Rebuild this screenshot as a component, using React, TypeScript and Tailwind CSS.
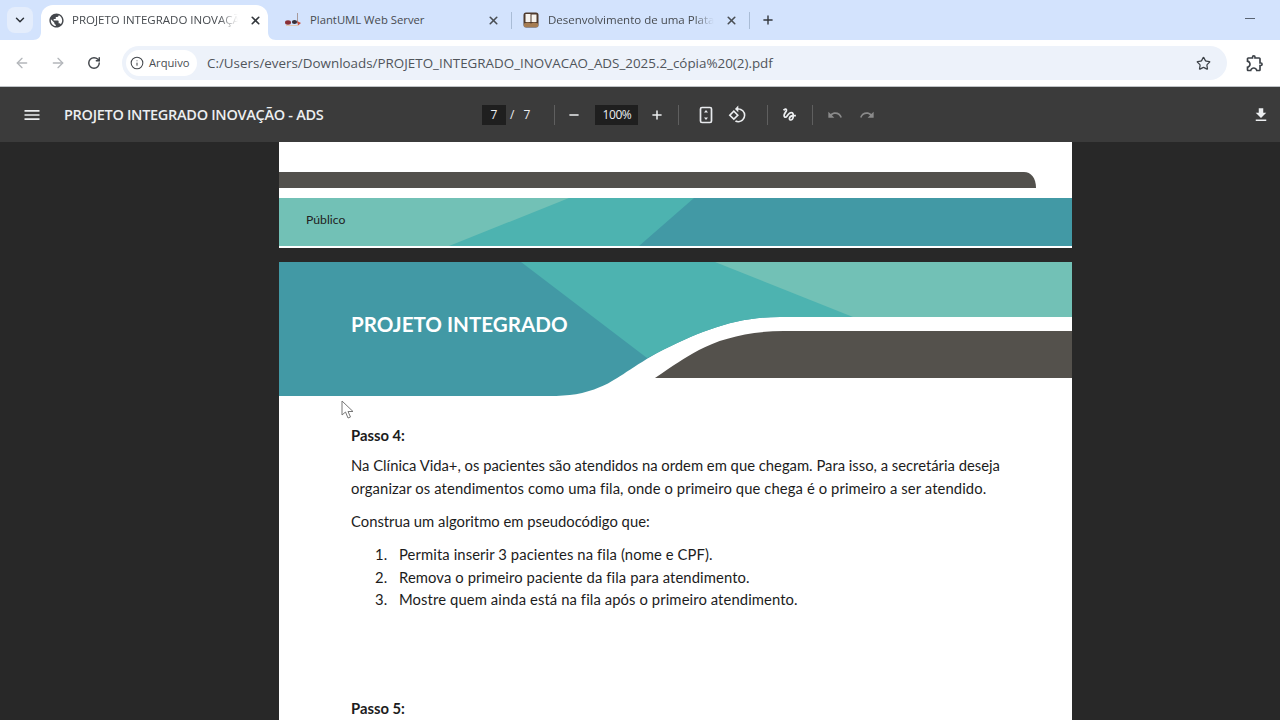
import { ArrowLeft, ArrowRight, ChevronDown, Minus, Plus, RotateCw, Info, Star, X } from 'lucide-react'
import { MdPublic, MdMenu, MdFileDownload, MdUndo, MdRedo, MdGesture, MdOutlineExtension, MdOutlineRotate90DegreesCcw } from 'react-icons/md'

function PlantFavicon() {
  return (
    <svg width="18" height="16" viewBox="0 0 18 16" className="shrink-0">
      <path d="M13.5 1v10" stroke="#a89a9a" strokeWidth="1" />
      <ellipse cx="4" cy="10.5" rx="3" ry="2.2" fill="#8a2f36" />
      <ellipse cx="10.5" cy="10" rx="2.6" ry="2" fill="#35303a" />
      <path d="M13 9l4 2-3 2.5z" fill="#c9503c" />
      <path d="M2 13.5h12" stroke="#e2c8b0" strokeWidth="1" />
    </svg>
  )
}

function BookFavicon() {
  return (
    <svg width="16" height="16" viewBox="0 0 16 16" className="shrink-0">
      <rect x="0.5" y="0.5" width="15" height="15" rx="2.5" fill="#4f3a2c" />
      <path d="M2.5 2h5v8h-5zM8.5 2.5h5v7.5h-5z" fill="#f7f3ee" />
      <path d="M1 11.5c3-1.5 5-1.5 7 0 2-1.5 4-1.5 7 0V15H1z" fill="#a57c52" />
    </svg>
  )
}

function FitIcon() {
  return (
    <svg width="20" height="20" viewBox="0 0 20 20" fill="none">
      <rect x="4.5" y="2.5" width="11" height="15" rx="1.5" stroke="#e8eaed" strokeWidth="1.7" />
      <path d="M10 5l2 2.4H8zM10 15l-2-2.4h4z" fill="#e8eaed" />
    </svg>
  )
}

function Separator() {
  return <div className="h-5 w-px bg-[#5f5f5f]" />
}

function TabStrip() {
  return (
    <div className="flex h-10 items-end bg-[#d3e3fd] font-['Open_Sans',sans-serif] text-[#474b50]">
      <div className="mb-[7px] ml-[7px] flex h-[26px] w-[26px] items-center justify-center rounded-lg bg-[#e4edfc]">
        <ChevronDown size={14} strokeWidth={2.5} className="text-[#2c3138]" />
      </div>
      <div className="relative ml-2 flex h-[35px] w-[227px] items-center rounded-t-xl bg-white pb-[5px] pl-[7px]">
        <svg width="8" height="8" viewBox="0 0 8 8" className="absolute bottom-0 left-[-8px]">
          <path d="M8 0V8H0C5 8 8 5 8 0Z" fill="#fff" />
        </svg>
        <MdPublic size={17} className="shrink-0 text-[#44474c]" />
        <span className="ml-[7px] w-[166px] overflow-hidden whitespace-nowrap text-[11.5px] [mask-image:linear-gradient(to_right,black_88%,transparent)]">
          PROJETO INTEGRADO INOVAÇÃO - ADS
        </span>
        <X size={13} strokeWidth={3} className="ml-[11px] shrink-0 text-[#33373c]" />
        <svg width="8" height="8" viewBox="0 0 8 8" className="absolute bottom-0 right-[-8px]">
          <path d="M0 0V8H8C3 8 0 5 0 0Z" fill="#fff" />
        </svg>
      </div>
      <div className="flex h-[35px] w-[244px] items-center pb-[5px] pl-4">
        <PlantFavicon />
        <span className="ml-[8px] w-[180px] whitespace-nowrap text-[11.3px]">PlantUML Web Server</span>
        <X size={13} strokeWidth={3} className="ml-[-1px] shrink-0 text-[#4a4e54]" />
        <div className="ml-[11px] h-[17px] w-px bg-[#a9bcd6]" />
      </div>
      <div className="flex h-[35px] w-[238px] items-center pb-[5px] pl-[11px]">
        <BookFavicon />
        <span className="ml-[9px] w-[170px] overflow-hidden whitespace-nowrap text-[11.5px] [mask-image:linear-gradient(to_right,black_88%,transparent)]">
          Desenvolvimento de uma Plataforma
        </span>
        <X size={13} strokeWidth={3} className="ml-[11px] shrink-0 text-[#4a4e54]" />
        <div className="ml-[11px] h-[17px] w-px bg-[#a9bcd6]" />
      </div>
      <div className="flex h-[35px] items-center pb-[5px] pl-[11px]">
        <Plus size={14} strokeWidth={2.4} className="text-[#33373c]" />
      </div>
      <div className="ml-auto flex h-10 items-center pb-1 pr-[25px]">
        <div className="h-px w-[10px] bg-[#5a6472]" />
      </div>
    </div>
  )
}

function AddressBar() {
  return (
    <div className="flex h-[47px] items-center border-b border-[#bfc3c7] bg-white font-['Open_Sans',sans-serif]">
      <ArrowLeft size={16} strokeWidth={2} className="ml-[14px] text-[#b4b7bb]" />
      <ArrowRight size={16} strokeWidth={2} className="ml-5 text-[#b4b7bb]" />
      <RotateCw size={14} strokeWidth={2.5} className="ml-[21px] text-[#43474c]" />
      <div className="ml-[21px] flex h-[34px] w-[1105px] items-center rounded-full bg-[#edf2fa] pl-1">
        <div className="flex h-[26px] w-[71px] items-center rounded-full bg-white pl-1">
          <Info size={14} strokeWidth={1.8} className="text-[#43474c]" />
          <span className="ml-[5px] text-[11.2px] text-[#4a4e53]">Arquivo</span>
        </div>
        <span className="ml-[10px] text-[13.4px] leading-5 text-[#50555b]">
          C:/Users/evers/Downloads/PROJETO_INTEGRADO_INOVACAO_ADS_2025.2_cópia%20(2).pdf
        </span>
        <Star size={15} strokeWidth={2} className="ml-auto mr-4 text-[#3d4248]" />
      </div>
      <MdOutlineExtension size={20} className="ml-[18px] text-[#3d4248]" />
    </div>
  )
}

function PdfToolbar() {
  return (
    <div className="flex h-[55px] items-center bg-[#3b3b3b] font-['Open_Sans',sans-serif] text-[#eceef0]">
      <MdMenu size={20} className="ml-[22px]" />
      <span className="ml-[22px] w-[418px] pt-[1px] text-[14.5px] font-semibold tracking-[-0.3px]">PROJETO INTEGRADO INOVAÇÃO - ADS</span>
      <div className="flex h-5 w-6 items-center justify-center bg-[#1f1f1f] text-[12px]">7</div>
      <span className="ml-[4px] text-[12px]">/</span>
      <span className="ml-[9px] w-[31px] text-[12px]">7</span>
      <Separator />
      <Minus size={14} strokeWidth={2.6} className="ml-3" />
      <div className="ml-[14px] flex h-5 w-[43px] items-center justify-center bg-[#1f1f1f] text-[12px] tracking-[-0.4px]">100%</div>
      <Plus size={14} strokeWidth={2.6} className="ml-3" />
      <div className="ml-[14px]"><Separator /></div>
      <div className="ml-[17px]"><FitIcon /></div>
      <MdOutlineRotate90DegreesCcw size={19} className="ml-[12px]" />
      <div className="ml-5"><Separator /></div>
      <MdGesture size={17} className="ml-[13px]" />
      <div className="ml-[14px]"><Separator /></div>
      <MdUndo size={16} className="ml-[14px] text-[#8a8a8a]" />
      <MdRedo size={16} className="ml-4 text-[#8a8a8a]" />
      <MdFileDownload size={18} className="ml-auto mr-[10px]" />
    </div>
  )
}

function PageFooter() {
  return (
    <div className="h-[106px] w-[793px] bg-white pt-[30px]">
      <svg width="793" height="16" viewBox="0 0 793 16" className="block">
        <path d="M0 0H745C752 0 757 6 757 16H0Z" fill="#52504c" />
      </svg>
      <div className="relative mt-[10px] h-[48px] overflow-hidden bg-[#4299a5]">
        <svg width="793" height="48" viewBox="0 0 793 48" className="absolute left-0 top-0">
          <path d="M0 0H415L360 48H0Z" fill="#4db3b0" />
          <path d="M0 0H290L170 48H0Z" fill="#72c1b6" />
        </svg>
        <span className="relative ml-[27px] block pt-[13px] font-['Lato',sans-serif] text-[12.2px] leading-[17px] text-[#222]">Público</span>
      </div>
    </div>
  )
}

function PageHeader() {
  return (
    <div className="relative h-[134px]">
      <svg width="793" height="134" viewBox="0 0 793 134" className="block">
        <path d="M0 0H793V55H501C455 55 420 70 378 91C350 107 335 120 321 125C305 132 290 134 270 134H0Z" fill="#4299a5" />
        <path d="M242 0H793V55H501C455 55 420 70 378 91L368 96Z" fill="#4db3b0" />
        <path d="M436 0H793V55H574Z" fill="#72c1b6" />
        <path d="M793 69H505C470 69 440 77 420 88C405 96 395 103 376 116H793Z" fill="#54514c" />
      </svg>
      <h1 className="absolute left-[72px] top-[48px] font-['Lato',sans-serif] text-[20.6px] font-bold leading-7 text-white">PROJETO INTEGRADO</h1>
    </div>
  )
}

function Cursor() {
  return (
    <svg width="14" height="20" viewBox="0 0 14 20" className="absolute left-[62px] top-[138px]">
      <path d="M1 1V15L4.5 12L7 18L9.5 17L7 11.5H12Z" fill="#fff" stroke="#777" strokeWidth="1" />
    </svg>
  )
}

export default function App() {
  const items = [
    'Permita inserir 3 pacientes na fila (nome e CPF).',
    'Remova o primeiro paciente da fila para atendimento.',
    'Mostre quem ainda está na fila após o primeiro atendimento.',
  ]

  return (
    <div className="flex h-[720px] w-[1280px] flex-col overflow-hidden bg-[#282828]">
      <TabStrip />
      <AddressBar />
      <PdfToolbar />
      <div className="flex flex-1 flex-col overflow-hidden pl-[279px]">
        <PageFooter />
        <div className="relative mt-[14px] w-[793px] flex-1 bg-white font-['Lato',sans-serif] text-[14.8px] text-[#1c1c1c]">
          <PageHeader />
          <Cursor />
          <div className="pl-[72px] pr-[60px] pt-[29px]">
            <p className="font-bold leading-5">Passo 4:</p>
            <p className="mt-[9px] leading-[23px]">
              Na Clínica Vida+, os pacientes são atendidos na ordem em que chegam. Para isso, a secretária deseja
              <br />
              <span className="tracking-[0.1px]">organizar os atendimentos como uma fila, onde o primeiro que chega é o primeiro a ser atendido.</span>
            </p>
            <p className="mt-[10px] leading-[23px]">Construa um algoritmo em pseudocódigo que:</p>
            <ol className="mt-[10px] tracking-[0.1px]">
              {items.map((item, i) => (
                <li key={i} className="flex h-[22.5px] items-center">
                  <span className="w-12 pl-6">{i + 1}.</span>
                  <span>{item}</span>
                </li>
              ))}
            </ol>
            <p className="mt-[87px] font-bold leading-5">Passo 5:</p>
          </div>
        </div>
      </div>
    </div>
  )
}
